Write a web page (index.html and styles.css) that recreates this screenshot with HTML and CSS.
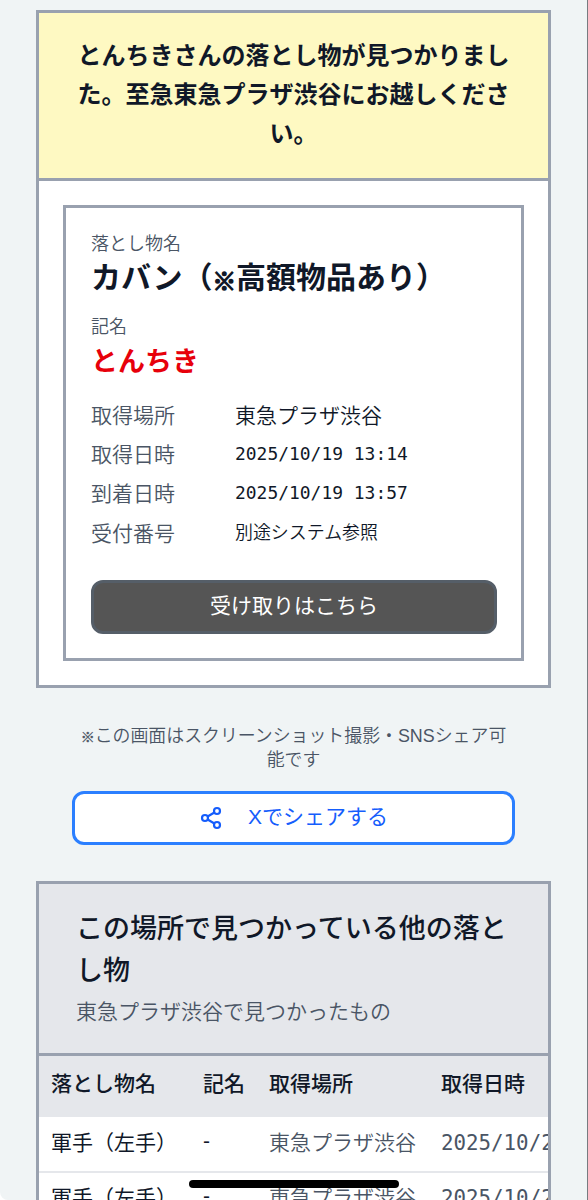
FILE: index.html
```html
<!DOCTYPE html>
<html lang="ja">
<head>
  <meta charset="UTF-8" />
  <meta name="viewport" content="width=device-width, initial-scale=1.0" />
  <title>落とし物のお知らせ</title>
  <link rel="stylesheet" href="styles.css">
</head>
<body>
  <main class="page">
    <section class="card">
      <h1 class="notice">とんちきさんの落とし物が見つかりました。至急東急プラザ渋谷にお越しください。</h1>
      <div class="card-body">
        <div class="item">
          <p class="label">落とし物名</p>
          <p class="item-name">カバン（<span class="kome">※</span>高額物品あり）</p>
          <p class="label label-owner">記名</p>
          <p class="owner">とんちき</p>
          <dl class="details">
            <dt>取得場所</dt>
            <dd>東急プラザ渋谷</dd>
            <dt>取得日時</dt>
            <dd class="mono">2025/10/19 13:14</dd>
            <dt>到着日時</dt>
            <dd class="mono">2025/10/19 13:57</dd>
            <dt>受付番号</dt>
            <dd class="mono">別途システム参照</dd>
          </dl>
          <button class="btn btn-receive">受け取りはこちら</button>
        </div>
      </div>
    </section>

    <section class="share">
      <p class="share-note"><span class="kome">※</span>この画面はスクリーンショット撮影・SNSシェア可能です</p>
      <button class="btn btn-share">
        <svg class="share-icon" viewBox="0 0 24 24" fill="none" stroke="currentColor" stroke-width="2.2">
          <circle cx="18" cy="5" r="3"/>
          <circle cx="6" cy="12" r="3"/>
          <circle cx="18" cy="19" r="3"/>
          <path d="M8.6 13.5l6.8 4M15.4 6.5l-6.8 4"/>
        </svg>
        <span>Xでシェアする</span>
      </button>
    </section>

    <section class="card others">
      <div class="others-head">
        <h2>この場所で見つかっている他の落とし物</h2>
        <p>東急プラザ渋谷で見つかったもの</p>
      </div>
      <div class="table-wrap">
        <table>
          <thead>
            <tr><th class="col-name">落とし物名</th><th class="col-owner">記名</th><th class="col-place">取得場所</th><th class="col-date">取得日時</th></tr>
          </thead>
          <tbody>
            <tr><td>軍手（左手）</td><td>-</td><td class="sub">東急プラザ渋谷</td><td class="sub date">2025/10/2</td></tr>
            <tr><td>軍手（左手）</td><td>-</td><td class="sub">東急プラザ渋谷</td><td class="sub date">2025/10/2</td></tr>
          </tbody>
        </table>
      </div>
    </section>
  </main>
  <div class="home-bar"></div>
</body>
</html>
```

FILE: styles.css
```css
* {
  box-sizing: border-box;
  margin: 0;
  padding: 0;
}
html {
  background: #fff;
}
body {
  height: 1200px;
  overflow: hidden;
  position: relative;
  font-family: "Liberation Sans", "Noto Sans CJK JP", sans-serif;
  font-size: 21px;
  color: #101828;
  background: #f0f4f5;
  border-right: 1px solid #777b80;
  border-radius: 0 0 0 8px;
}
.page {
  padding: 10px 36px 0;
}
.card {
  width: 515px;
  background: #fff;
  border: 3px solid #99a1af;
}
.notice {
  height: 168px;
  padding: 23px 36px 0;
  font-size: 24px;
  line-height: 39px;
  font-weight: 700;
  text-align: center;
  background: #fef9c2;
  border-bottom: 3px solid #99a1af;
}
.card-body {
  padding: 24px 24px 24px;
}
.item {
  height: 456px;
  padding: 24px 23px 0 25px;
  border: 3px solid #99a1af;
}
.label {
  font-size: 18px;
  line-height: 24px;
  font-weight: 350;
  color: #4a5565;
}
.label-owner {
  margin-top: 16px;
}
.item-name {
  font-size: 30px;
  line-height: 43px;
  font-weight: 700;
}
.item-name .kome {
  font-size: 23.5px;
  line-height: 1;
  vertical-align: -2px;
  -webkit-text-stroke: 1.5px currentColor;
}
.owner {
  font-size: 27px;
  line-height: 47px;
  font-weight: 700;
  color: #e7000b;
}
.details {
  display: grid;
  grid-template-columns: 144px 1fr;
  grid-auto-rows: 39.2px;
  line-height: 39px;
  margin-top: 10px;
  font-weight: 350;
}
.details dt {
  color: #4a5565;
}
.details .mono {
  font-family: "DejaVu Sans Mono", "Noto Sans CJK JP", monospace;
  font-size: 17.95px;
  line-height: 38px;
}
.btn {
  display: flex;
  align-items: center;
  justify-content: center;
  height: 54px;
  border-radius: 12px;
  font-family: inherit;
  font-size: 21px;
}
.btn-receive {
  width: 406px;
  margin-top: 27px;
  padding-bottom: 6px;
  color: #fff;
  background: #555;
  border: 3px solid #555e68;
}
.share {
  padding: 36px 36px 36px;
}
.share-note {
  font-size: 17.9px;
  line-height: 24px;
  font-weight: 350;
  text-align: center;
  color: #4a5565;
}
.share-note .kome {
  font-size: 14px;
  line-height: 1;
  -webkit-text-stroke: 0.4px currentColor;
}
.btn-share {
  width: 443px;
  margin-top: 19px;
  gap: 25px;
  color: #155dfc;
  background: #fff;
  border: 3px solid #2b7fff;
}
.btn-share span {
  padding-bottom: 6px;
}
.share-icon {
  width: 24px;
  height: 24px;
}
.others-head {
  height: 172px;
  padding: 24px 37px 0;
  background: #e5e7eb;
  border-bottom: 3px solid #99a1af;
}
.others-head h2 {
  font-size: 27px;
  line-height: 42px;
  font-weight: 500;
}
.others-head p {
  line-height: 40px;
  font-weight: 350;
  color: #4a5565;
}
.table-wrap {
  overflow: hidden;
}
table {
  width: 640px;
  table-layout: fixed;
  border-collapse: collapse;
}
th,
td {
  padding: 0 12px;
  text-align: left;
  white-space: nowrap;
}
th {
  height: 61px;
  padding-bottom: 9px;
  font-weight: 500;
  background: #e5e7eb;
}
td {
  height: 55px;
  padding-bottom: 7px;
  border-bottom: 2px solid #e5e7eb;
}
.col-name { width: 152px; }
.col-owner { width: 66px; }
.col-place { width: 172px; }
.sub {
  font-weight: 350;
  color: #4a5565;
}
.date {
  padding-bottom: 3px;
  font-family: "DejaVu Sans Mono", monospace;
  font-size: 20.8px;
}
.home-bar {
  position: absolute;
  left: 189px;
  bottom: 12px;
  width: 210px;
  height: 8px;
  border-radius: 4px;
  background: #000;
}
```
